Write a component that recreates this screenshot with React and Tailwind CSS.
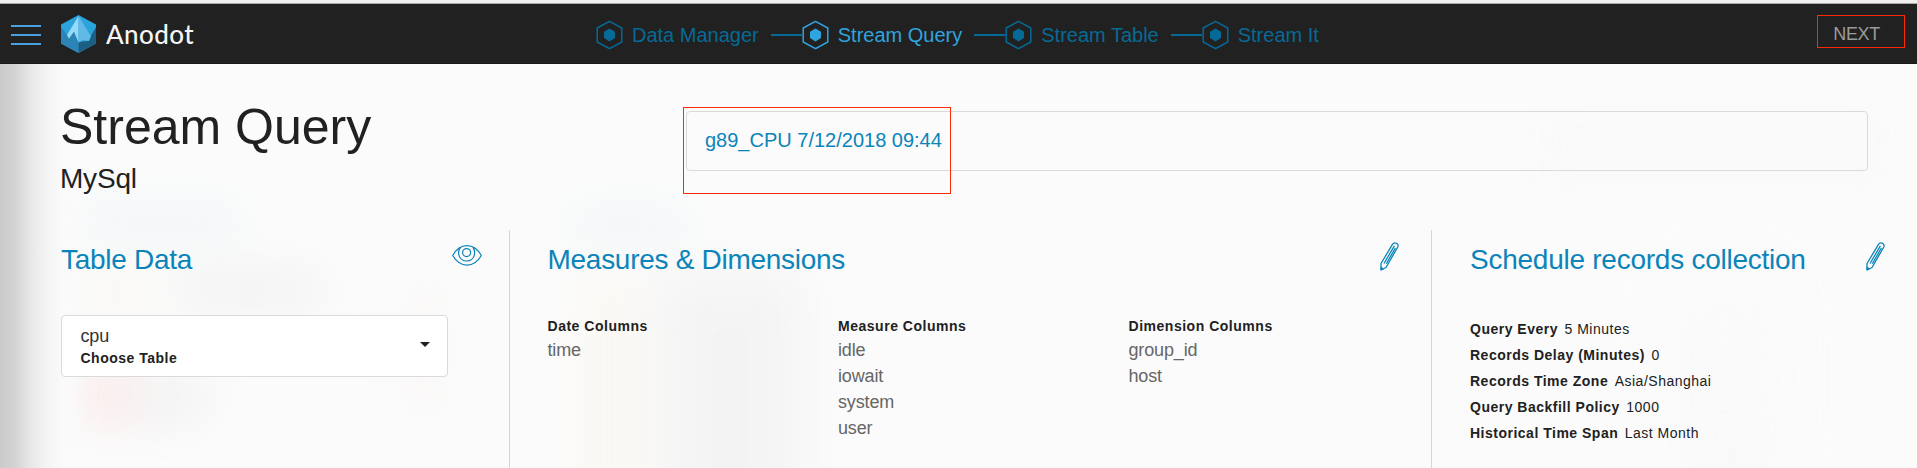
const BLUE = '#0b84b9';

function StepIcon({ color }) {
  return (
    <svg className="block h-[30px] w-[27px] shrink-0" viewBox="0 0 27 30" fill="none">
      <path d="M13.5 1.3 25.8 8V22L13.5 28.7 1.2 22V8Z" stroke={color} strokeWidth="1.5" />
      <path d="M13.5 8.6 19 11.7V18.1L13.5 21.4 8 18.1V11.7Z" fill={color} />
    </svg>
  );
}

function Step({ label, active, first }) {
  return (
    <div className="flex items-center">
      {!first && <div className="mt-[-1px] h-[2px] w-[31px] bg-[#066a97]" />}
      <StepIcon color={active ? '#2fa4df' : '#066a97'} />
      <span className={active ? 'ml-[9px] text-[20px] leading-6 text-[#2fa4df]' : 'ml-[9px] text-[20px] leading-6 text-[#066a97]'}>
        {label}
      </span>
    </div>
  );
}

function Logo() {
  return (
    <svg className="block h-[38px] w-[35px]" viewBox="0 0 35 38">
      <path d="M17.5 0 35 9.5V28.5L17.5 38 0 28.5V9.5Z" fill="#2ba3dd" />
      <path d="M0 12 6 20 8 23.5 13 17 17.5 27V38L0 28.5Z" fill="#2d83b5" />
      <path d="M17.5 27 27 26 35 12V28.5L17.5 38Z" fill="#1c5f83" />
      <path d="M17.5 1 6 20 8 23.5 13 16.5 17.5 27.5Z" fill="#97d9f8" />
      <path d="M17.5 1 30 21.5 28 26 22 25 17.5 27.5Z" fill="#62b9e5" />
    </svg>
  );
}

function Eye() {
  return (
    <svg className="block h-[21px] w-[30px]" viewBox="0 0 30 21" fill="none" stroke={BLUE} strokeWidth="1.2">
      <path d="M.7 10.5C8-2.7 22-2.7 29.3 10.5C22 23.3 8 23.3 .7 10.5Z" />
      <path d="M8.4 2.4C5 7 6.4 16 14.7 16S24 7 21 2.4" />
      <circle cx="14.6" cy="7.6" r="4" />
    </svg>
  );
}

function Pencil() {
  return (
    <svg className="block h-[29px] w-[19px]" viewBox="0 0 19 29" fill="none" stroke={BLUE} strokeWidth="1.3" strokeLinejoin="round">
      <path d="M1 21.5 12.6 2.2Q14.2 .2 16.5 1.3Q18.8 2.7 17.8 5L6 25.5 1 28Z" />
      <path d="M1.2 27.5 1.4 25.4 3 27ZM4 21.5 14.4 3.8M6.3 21.8 15.4 6" />
    </svg>
  );
}

function Column({ title, items }) {
  return (
    <div className="w-[290.5px]">
      <div className="mb-px text-[14px] font-bold leading-5 tracking-[.52px] text-[#212121]">{title}</div>
      {items.map((item) => (
        <div key={item} className="text-[18px] leading-[26px] tracking-[-.15px] text-[#666]">{item}</div>
      ))}
    </div>
  );
}

const schedule = [
  ['Query Every', '5 Minutes'],
  ['Records Delay (Minutes)', '0'],
  ['Records Time Zone', 'Asia/Shanghai'],
  ['Query Backfill Policy', '1000'],
  ['Historical Time Span', 'Last Month'],
];

function Backdrop() {
  return (
    <div className="pointer-events-none absolute inset-0 overflow-hidden">
      <div className="absolute left-[80px] top-[142px] h-[30px] w-[160px] bg-[#edf4f7] opacity-80 blur-xl" />
      <div className="absolute left-[570px] top-[146px] h-[30px] w-[120px] bg-[#edf4f7] opacity-80 blur-xl" />
      <div className="absolute left-[180px] top-[212px] h-[28px] w-[140px] bg-[#ececec] opacity-80 blur-xl" />
      <div className="absolute left-[80px] top-[215px] h-[30px] w-[70px] bg-[#f8f5ec] opacity-80 blur-xl" />
      <div className="absolute left-[80px] top-[310px] h-[42px] w-[60px] bg-[#fbdfdf] opacity-80 blur-xl" />
      <div className="absolute left-[135px] top-[314px] h-[40px] w-[70px] bg-[#eeeeee] opacity-80 blur-xl" />
      <div className="absolute left-[400px] top-[215px] h-[140px] w-[50px] bg-[#faf7f5] opacity-60 blur-xl" />
      <div className="absolute left-[585px] top-[216px] h-[260px] w-[55px] bg-[#fbf6ee] opacity-70 blur-xl" />
      <div className="absolute left-[660px] top-[212px] h-[260px] w-[140px] bg-[#f2f2f2] opacity-80 blur-xl" />
      <div className="absolute left-[1690px] top-[220px] h-[190px] w-[70px] bg-[#faf8f8] opacity-70 blur-2xl" />
      <div className="absolute left-[1700px] top-[380px] h-[40px] w-[60px] bg-[#f5f7f9] opacity-70 blur-xl" />
      <div className="absolute left-[1545px] top-[60px] h-[60px] w-[340px] bg-[#f9f9f9] blur-lg" />
      <div className="absolute inset-y-0 left-0 w-[90px] bg-[linear-gradient(to_right,#cbcbcb_0px,#d2d2d2_14px,#e6e6e6_29px,#f3f3f3_45px,#fafafa_62px,rgba(251,251,251,0)_90px)]" />
    </div>
  );
}

export default function App() {
  return (
    <div className="relative flex h-[468px] w-[1917px] flex-col overflow-hidden bg-[#fbfbfb] font-['Liberation_Sans',Arial,sans-serif] text-[#212121]">
      <div className="h-1 shrink-0 border-b border-[#a9a9a9] bg-[#f0f0f0]" />
      <header className="flex h-[60px] shrink-0 items-start border-b border-[#181818] bg-[#212121]">
        <div className="ml-[11px] mt-[21px] flex w-[30px] flex-col gap-[7px]">
          <div className="h-[2px] bg-[#4a9fe0]" />
          <div className="h-[2px] bg-[#4a9fe0]" />
          <div className="h-[2px] bg-[#4a9fe0]" />
        </div>
        <div className="ml-5 mt-[11px]"><Logo /></div>
        <div className="ml-[10px] mt-3 w-[490px] font-['Lato',sans-serif] text-[26px] font-medium leading-9 tracking-[.4px] text-[#f5f5f5]">Anodot</div>
        <nav className="mt-4 flex w-[1140px] gap-[12px]">
          <Step label="Data Manager" first />
          <Step label="Stream Query" active />
          <Step label="Stream Table" />
          <Step label="Stream It" />
        </nav>
        <button className="ml-auto mr-[37px] mt-[18px] text-[18px] leading-6 tracking-[-.3px] text-[#9a9a9a]">NEXT</button>
      </header>
      <main className="relative flex-1">
        <Backdrop />
        <div className="relative flex h-[166px] items-start">
          <div className="ml-[60px] w-[626px]">
            <h1 className="mt-[34px] text-[50px] leading-[58px]">Stream Query</h1>
            <div className="mt-[7px] text-[28px] leading-8 tracking-[-.2px]">MySql</div>
          </div>
          <div className="mt-[47px] flex h-[60px] w-[1182px] items-center rounded border border-[#dadada] pb-[3px] pl-[18px] text-[20px] text-[#0b84b9]">
            g89_CPU 7/12/2018 09:44
          </div>
        </div>
        <div className="relative flex h-[238px]">
          <section className="w-[510px] border-r border-[#d6d6d6] pl-[61px]">
            <div className="flex justify-between pr-[27px]">
              <h2 className="mt-[14px] text-[28px] leading-8 tracking-[-.28px] text-[#0b84b9]">Table Data</h2>
              <div className="mt-[15px]"><Eye /></div>
            </div>
            <div className="mt-[39px] flex h-[62px] w-[387px] items-center justify-between rounded border border-[#dadada] bg-white pl-[18.5px] pr-[17px]">
              <div>
                <div className="text-[18px] leading-6 tracking-[-.15px] text-[#333]">cpu</div>
                <div className="text-[14px] font-bold leading-5 tracking-[.5px]">Choose Table</div>
              </div>
              <div className="mt-[-3px] h-0 w-0 border-x-[5px] border-t-[5px] border-x-transparent border-t-[#212121]" />
            </div>
          </section>
          <section className="w-[922px] border-r border-[#d6d6d6] pl-[37.5px]">
            <div className="flex justify-between pr-[32px]">
              <h2 className="mt-[14px] text-[28px] leading-8 tracking-[-.28px] text-[#0b84b9]">Measures &amp; Dimensions</h2>
              <div className="mt-3"><Pencil /></div>
            </div>
            <div className="mt-[40px] flex">
              <Column title="Date Columns" items={['time']} />
              <Column title="Measure Columns" items={['idle', 'iowait', 'system', 'user']} />
              <Column title="Dimension Columns" items={['group_id', 'host']} />
            </div>
          </section>
          <section className="flex-1 pl-[38px]">
            <div className="flex justify-between pr-8">
              <h2 className="mt-[14px] text-[28px] leading-8 tracking-[-.25px] text-[#0b84b9]">Schedule records collection</h2>
              <div className="mt-3"><Pencil /></div>
            </div>
            <div className="mt-[40px] text-[14px] leading-[26px] tracking-[.5px]">
              {schedule.map(([k, v]) => (
                <div key={k} className="flex gap-[6.5px]">
                  <span className="font-bold">{k}</span>
                  <span>{v}</span>
                </div>
              ))}
            </div>
          </section>
        </div>
      </main>
      <div className="absolute left-[683px] top-[107px] h-[87px] w-[268px] border border-[#ff2a05]" />
      <div className="absolute left-[1817px] top-[15px] h-[33px] w-[88px] border border-[#ff2a05]" />
    </div>
  );
}
